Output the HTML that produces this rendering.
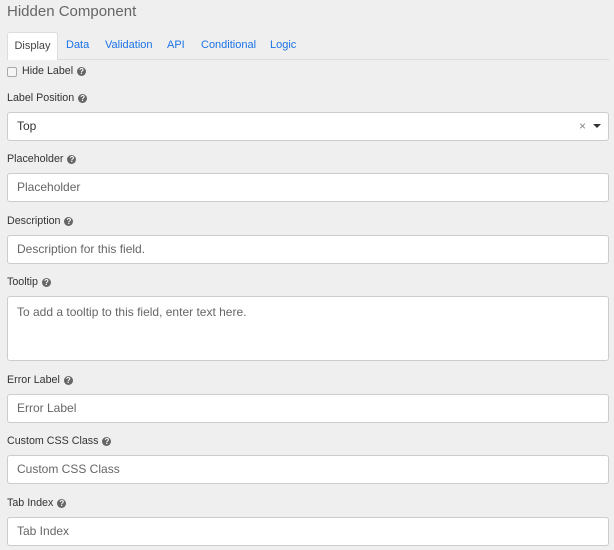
<!DOCTYPE html>
<html><head><style>
body{margin:0;width:614px;height:550px;background:#efefef;font-family:"Liberation Sans",sans-serif;position:relative;overflow:hidden}
.a{position:absolute}
.t{left:7px;top:3px;font-size:15px;color:#666}
.tabline{left:7px;right:5px;top:59px;height:1px;background:#ddd}
.tab{top:32px;height:27px;line-height:27px;font-size:11px;color:#1a73e8}
.act{left:7px;width:49px;background:#fff;border:1px solid #ddd;border-bottom:none;border-radius:3px 3px 0 0;color:#444;text-align:center}
.lbl{left:7px;font-size:10.7px;color:#333}
.q{display:inline-block;width:9px;height:9px;border-radius:50%;background:#666;color:#fff;font-size:8px;line-height:9px;text-align:center;font-weight:bold;vertical-align:0;margin-left:4px}
.in{left:7px;width:600px;height:27px;background:#fff;border:1px solid #ccc;border-radius:3px;font-size:12px;color:#666;line-height:27px;text-indent:9px}
</style></head><body>
<div class="a t">Hidden Component</div>
<div class="a tabline"></div>
<div class="a tab act">Display</div>
<div class="a tab" style="left:66px">Data</div>
<div class="a tab" style="left:105px">Validation</div>
<div class="a tab" style="left:167px">API</div>
<div class="a tab" style="left:201px">Conditional</div>
<div class="a tab" style="left:270px">Logic</div>
<div class="a" style="left:7px;top:67px;width:8px;height:8px;border:1px solid #aaa;border-radius:2px;background:#f5f5f5"></div>
<div class="a lbl" style="left:22px;top:65px">Hide Label<span class="q">?</span></div>
<div class="a lbl" style="top:92px">Label Position<span class="q">?</span></div>
<div class="a in" style="top:112px;color:#333">Top<span style="position:absolute;right:22px;top:0;color:#888;font-size:12px;text-indent:0">×</span><span style="position:absolute;right:7px;top:11px;width:0;height:0;border-left:4px solid transparent;border-right:4px solid transparent;border-top:4px solid #333;text-indent:0"></span></div>
<div class="a lbl" style="top:153px">Placeholder<span class="q">?</span></div>
<div class="a in" style="top:173px">Placeholder</div>
<div class="a lbl" style="top:215px">Description<span class="q">?</span></div>
<div class="a in" style="top:235px">Description for this field.</div>
<div class="a lbl" style="top:276px">Tooltip<span class="q">?</span></div>
<div class="a in" style="top:296px;height:63px;line-height:30px">To add a tooltip to this field, enter text here.</div>
<div class="a lbl" style="top:374px">Error Label<span class="q">?</span></div>
<div class="a in" style="top:394px">Error Label</div>
<div class="a lbl" style="top:435px">Custom CSS Class<span class="q">?</span></div>
<div class="a in" style="top:455px">Custom CSS Class</div>
<div class="a lbl" style="top:497px">Tab Index<span class="q">?</span></div>
<div class="a in" style="top:517px">Tab Index</div>
</body></html>
